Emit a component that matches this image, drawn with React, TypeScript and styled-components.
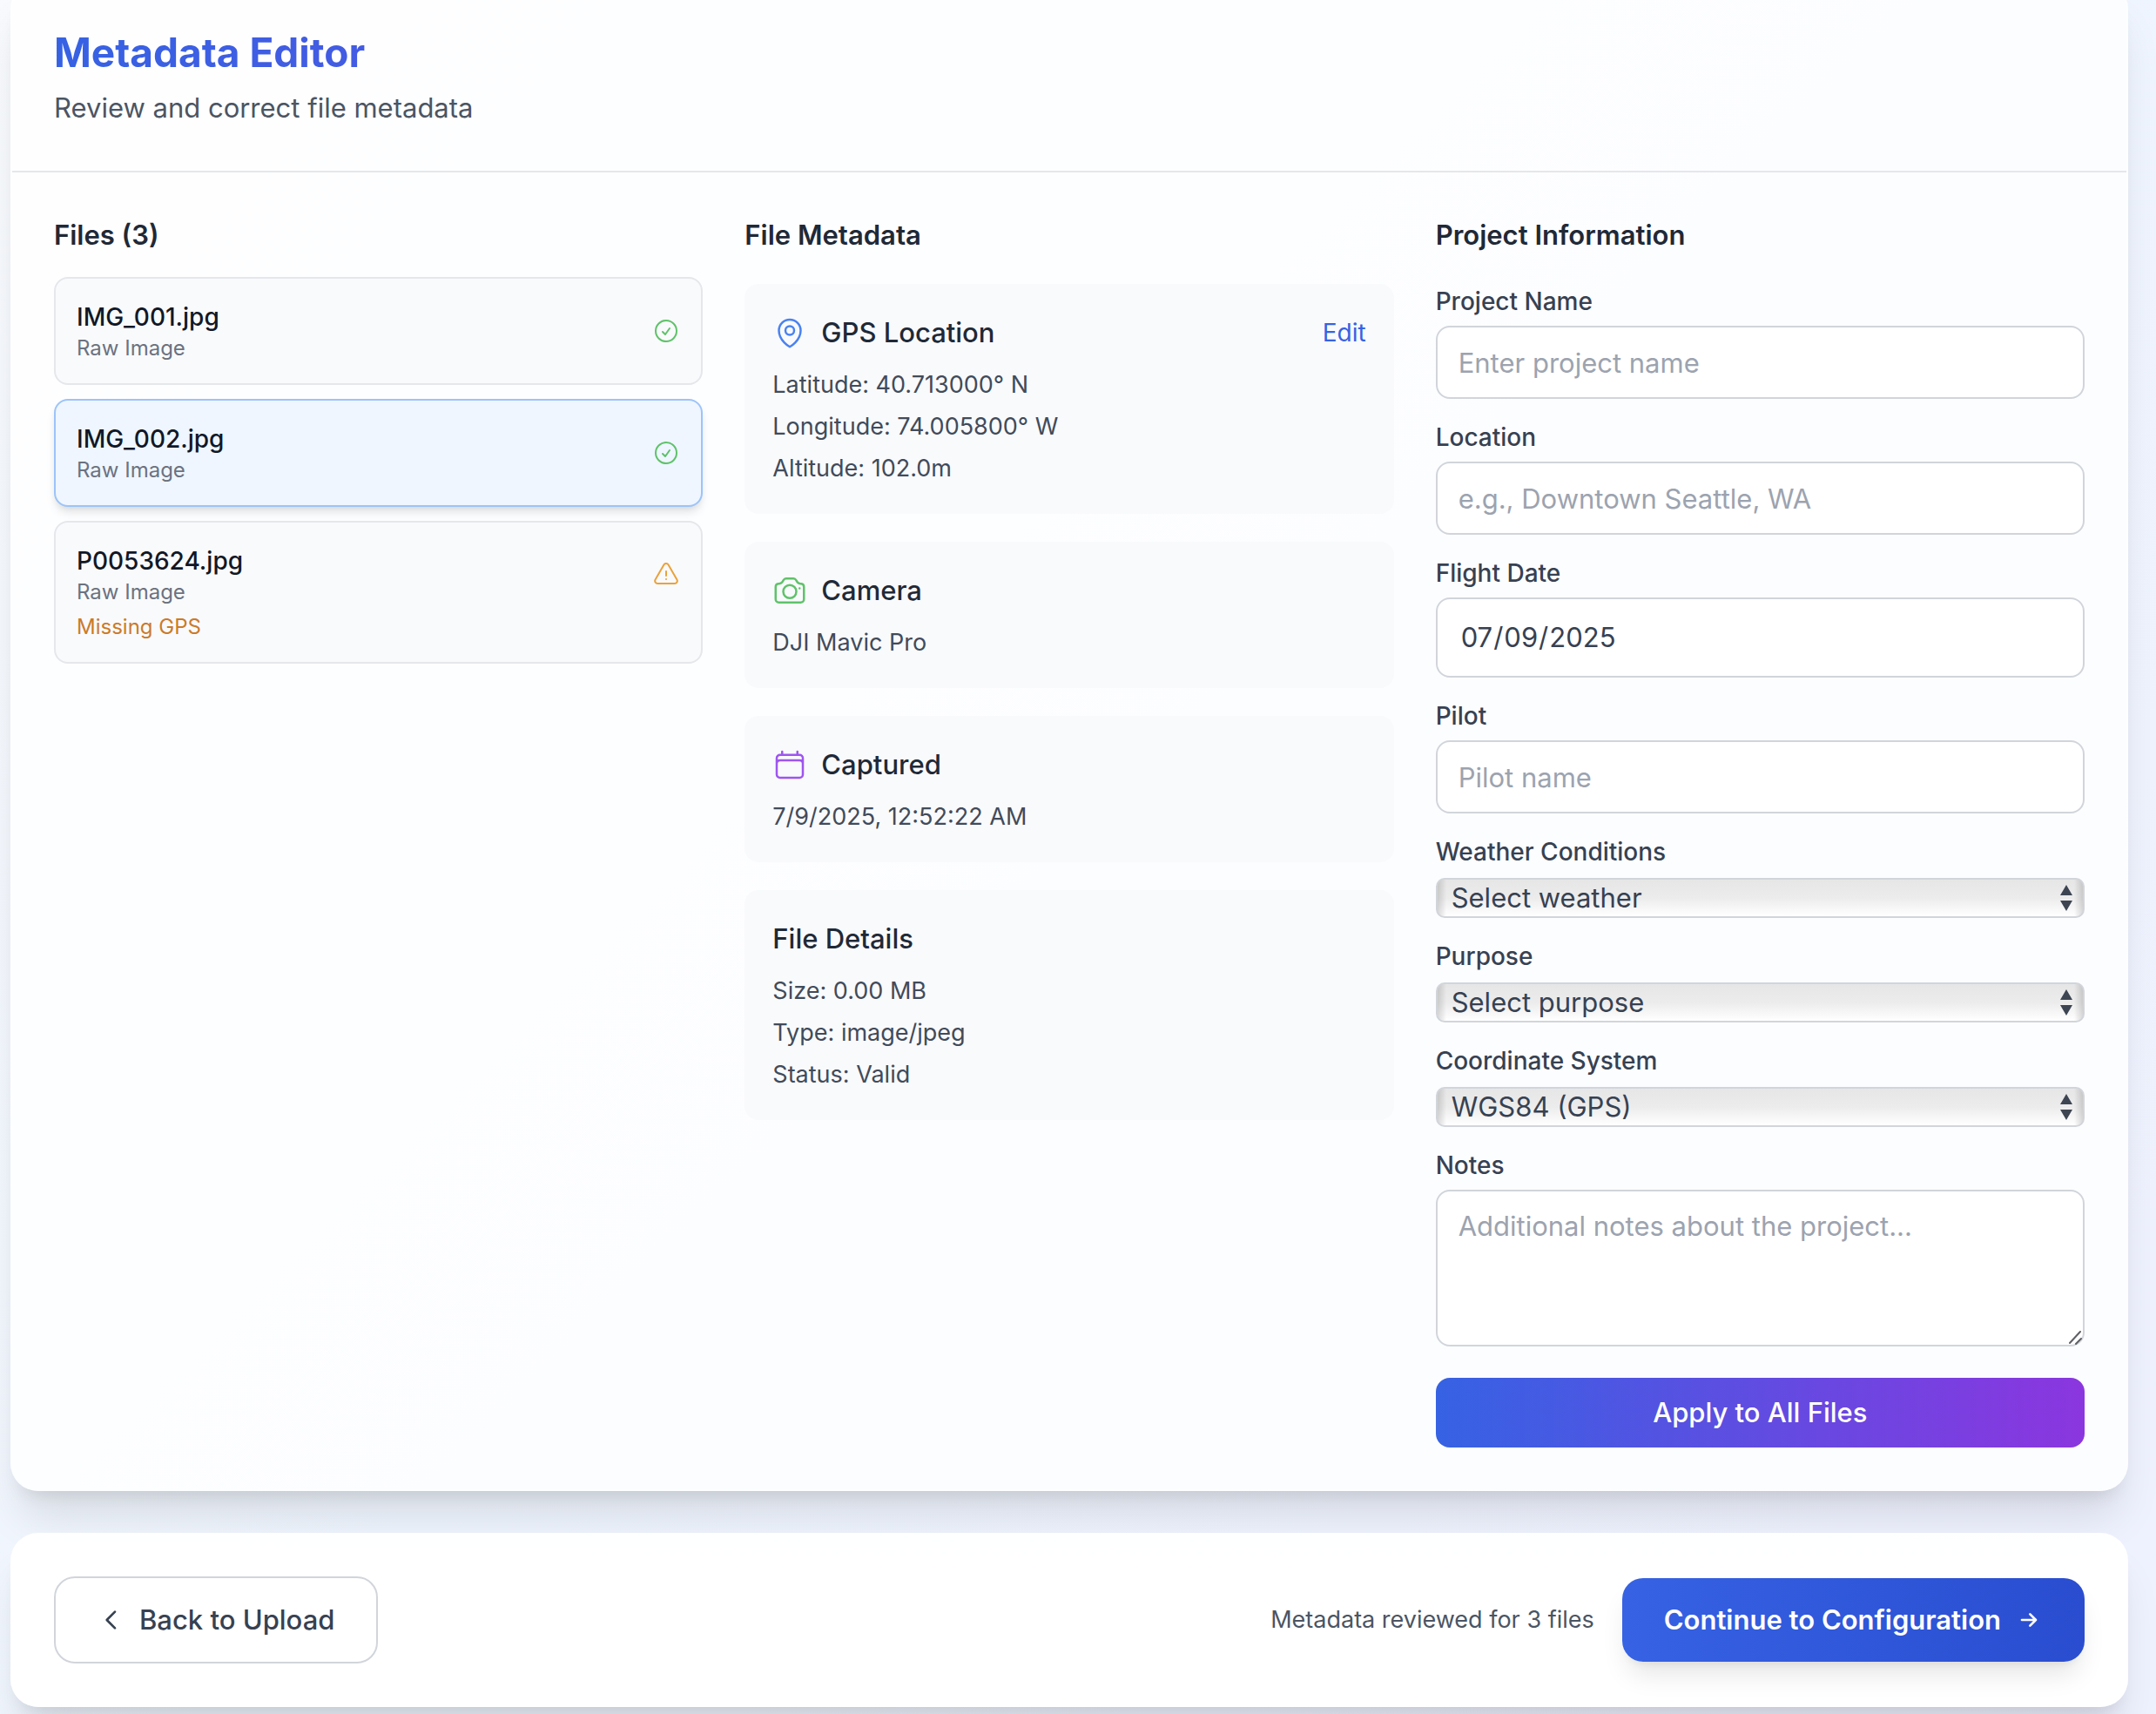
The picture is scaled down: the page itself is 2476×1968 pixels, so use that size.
import React, { useState } from 'react';
import styled, { createGlobalStyle, css } from 'styled-components';

const GlobalStyle = createGlobalStyle`
  *, *::before, *::after { box-sizing: border-box; }
  html { background: #f1f4fd; }
  body {
    margin: 0;
    overflow: hidden;
    font-family: Inter, "Liberation Sans", sans-serif;
    font-size: 31px;
    line-height: 48px;
    color: #1f2937;
    -webkit-font-smoothing: antialiased;
  }
  h1, h2, h3, p { margin: 0; font-size: inherit; font-weight: inherit; }
  button, input, select, textarea { font: inherit; color: inherit; margin: 0; }
`;

const Page = styled.main`
  display: flex;
  flex-direction: column;
  gap: 48px;
  margin-top: -22px;
  padding: 0 32px 8px 12px;
  background: linear-gradient(135deg, #f8fafd 0%, #eff5fe 50%, #eef1fe 100%);
`;

const Card = styled.section`
  border: 2px solid rgba(255, 255, 255, 0.2);
  border-radius: 32px;
  background: rgba(255, 255, 255, 0.82);
  background-clip: border-box;
  box-shadow: 0 40px 50px -10px rgba(0, 0, 0, 0.1), 0 16px 20px -12px rgba(0, 0, 0, 0.1);
`;

const Header = styled.header`
  padding: 48px;
  border-bottom: 2px solid #e5e7eb;
`;

const Title = styled.h1`
  margin-bottom: 8px;
  font-size: 46px;
  line-height: 64px;
  font-weight: 700;
  color: transparent;
  background: linear-gradient(90deg, #3662e3, #8b36df);
  background-clip: text;
  -webkit-background-clip: text;
`;

const Subtitle = styled.p`
  color: #4b5563;
`;

const Columns = styled.div`
  display: grid;
  grid-template-columns: repeat(3, minmax(0, 1fr));
  gap: 48px;
  padding: 48px;
`;

const Column = styled.div<{ $gap: number }>`
  display: flex;
  flex-direction: column;
  gap: ${(p) => p.$gap}px;
`;

const ColumnTitle = styled.h2`
  font-weight: 600;
`;

const FileList = styled.div`
  display: flex;
  flex-direction: column;
  gap: 16px;
`;

const FileItem = styled.button<{ $active: boolean }>`
  display: block;
  width: 100%;
  padding: 24px;
  border: 2px solid #e5e7eb;
  border-radius: 16px;
  background: #f9fafc;
  text-align: left;
  cursor: pointer;
  ${(p) =>
    p.$active &&
    css`
      border-color: #9cc4f9;
      background: #eff6ff;
      box-shadow: 0 8px 12px -2px rgba(0, 0, 0, 0.1), 0 4px 8px -4px rgba(0, 0, 0, 0.1);
    `}
`;

const FileRow = styled.span`
  display: flex;
  align-items: center;
  justify-content: space-between;
`;

const FileText = styled.span`
  display: flex;
  flex-direction: column;
`;

const FileName = styled.span`
  font-size: 28px;
  line-height: 40px;
  font-weight: 500;
  color: #111827;
`;

const FileKind = styled.span`
  font-size: 24px;
  line-height: 32px;
  color: #6b7280;
`;

const FileIssue = styled.span`
  display: block;
  margin-top: 8px;
  font-size: 24px;
  line-height: 32px;
  color: #cb7a2a;
`;

const Icon = styled.svg<{ $size: number; $color?: string }>`
  display: block;
  flex: none;
  width: ${(p) => p.$size}px;
  height: ${(p) => p.$size}px;
  fill: none;
  stroke: ${(p) => p.$color ?? 'currentColor'};
  stroke-linecap: round;
  stroke-linejoin: round;
`;

const Panel = styled.article`
  padding: 32px;
  border-radius: 16px;
  background: #f9fafc;
`;

const PanelHead = styled.div`
  display: flex;
  align-items: center;
  gap: 16px;
  margin-bottom: 16px;
`;

const PanelTitle = styled.h3`
  flex: 1;
  font-weight: 500;
`;

const EditButton = styled.button`
  padding: 0;
  border: 0;
  background: none;
  font-size: 28px;
  line-height: 40px;
  color: #3662e3;
  cursor: pointer;
`;

const PanelLines = styled.div`
  display: flex;
  flex-direction: column;
  gap: 8px;
  font-size: 27px;
  line-height: 40px;
  color: #414b5a;
`;

const Form = styled.form`
  display: flex;
  flex-direction: column;
  gap: 24px;
`;

const Field = styled.div`
  display: flex;
  flex-direction: column;
  gap: 8px;
`;

const Label = styled.label`
  font-size: 28px;
  line-height: 40px;
  font-weight: 500;
  color: #374151;
`;

const control = css`
  width: 100%;
  padding: 16px 24px;
  border: 2px solid #d1d5db;
  border-radius: 16px;
  background: #fff;
  color: #374151;
  &::placeholder { color: #9ca3af; opacity: 1; }
`;

const TextInput = styled.input`
  ${control}
  height: 84px;
`;

const DateInput = styled.input`
  ${control}
  height: 92px;
  padding: 16px 24px;
  &::-webkit-datetime-edit { padding: 0 2px; }
  &::-webkit-calendar-picker-indicator { opacity: 0; }
`;

const NotesBox = styled.div`
  display: grid;
  margin-bottom: 12px;
  > * { grid-area: 1 / 1; }
`;

const NotesArea = styled.textarea`
  ${control}
  display: block;
  height: 180px;
  resize: none;
`;

const Grip = styled.svg`
  place-self: end;
  width: 16px;
  height: 16px;
  margin: 2px;
  fill: none;
  stroke: #5f6064;
  stroke-width: 2;
  stroke-linecap: round;
  pointer-events: none;
`;

const SelectBox = styled.div`
  display: grid;
  align-items: center;
  margin-top: 2px;
  > * { grid-area: 1 / 1; }
`;

const Select = styled.select`
  appearance: none;
  width: 100%;
  height: 46px;
  padding: 0 48px 0 16px;
  border: 2px solid #d1d5db;
  border-radius: 10px;
  line-height: 40px;
  color: #374151;
  background:
    linear-gradient(90deg, rgba(0, 0, 0, 0.14), transparent 10px, transparent calc(100% - 10px), rgba(0, 0, 0, 0.14)),
    linear-gradient(#e6e6e6, #ececec 50%, #ffffff);
`;

const Stepper = styled.svg`
  justify-self: end;
  width: 14px;
  height: 30px;
  margin-right: 14px;
  fill: #3d4552;
  pointer-events: none;
`;

const ApplyButton = styled.button`
  height: 80px;
  border: 0;
  border-radius: 16px;
  background: linear-gradient(90deg, #3662e3, #8b36df);
  font-weight: 500;
  color: #fff;
  cursor: pointer;
`;

const Footer = styled(Card).attrs({ as: 'footer' })`
  display: flex;
  align-items: center;
  justify-content: space-between;
  padding: 48px;
  background: rgba(255, 255, 255, 0.95);
`;

const FooterEnd = styled.div`
  display: flex;
  align-items: center;
  gap: 32px;
`;

const FooterNote = styled.span`
  font-size: 27px;
  line-height: 40px;
  color: #4b5563;
`;

const FooterButton = styled.button<{ $primary?: boolean }>`
  display: flex;
  align-items: center;
  gap: 16px;
  padding: 24px 48px;
  border: 2px solid #d1d5db;
  border-radius: 24px;
  background: transparent;
  font-weight: 500;
  color: #374151;
  cursor: pointer;
  ${(p) =>
    p.$primary
      ? css`
          border: 0;
          background: linear-gradient(90deg, #3662e3, #2a4dd0);
          font-weight: 600;
          color: #fff;
          box-shadow: 0 20px 30px -6px rgba(0, 0, 0, 0.1), 0 8px 12px -8px rgba(0, 0, 0, 0.1);
        `
      : ''}
`;

const files = [
  { name: 'IMG_001.jpg', kind: 'Raw Image', issue: '' },
  { name: 'IMG_002.jpg', kind: 'Raw Image', issue: '' },
  { name: 'P0053624.jpg', kind: 'Raw Image', issue: 'Missing GPS' },
];

const ValidIcon = () => (
  <Icon viewBox="0 0 24 24" $size={32} $color="#5fc26a" strokeWidth={1.5} aria-hidden>
    <path d="M9 12.75 11.25 15 15 9.75M21 12a9 9 0 1 1-18 0 9 9 0 0 1 18 0Z" />
  </Icon>
);

const WarningIcon = () => (
  <Icon viewBox="0 0 24 24" $size={32} $color="#e9a23b" strokeWidth={1.5} aria-hidden>
    <path d="M12 9v3.75m-9.303 3.376c-.866 1.5.217 3.374 1.948 3.374h14.71c1.73 0 2.813-1.874 1.948-3.374L13.949 3.378c-.866-1.5-3.032-1.5-3.898 0L2.697 16.126ZM12 15.75h.007v.008H12v-.008Z" />
  </Icon>
);

const PinIcon = () => (
  <Icon viewBox="0 0 24 24" $size={40} $color="#4a82f0" strokeWidth={1.5} aria-hidden>
    <path d="M15 10.5a3 3 0 1 1-6 0 3 3 0 0 1 6 0Z" />
    <path d="M19.5 10.5c0 7.142-7.5 11.25-7.5 11.25S4.5 17.642 4.5 10.5a7.5 7.5 0 1 1 15 0Z" />
  </Icon>
);

const CameraIcon = () => (
  <Icon viewBox="0 0 24 24" $size={40} $color="#5fc26a" strokeWidth={1.5} aria-hidden>
    <path d="M6.827 6.175A2.31 2.31 0 0 1 5.186 7.23c-.38.054-.757.112-1.134.175C2.999 7.58 2.25 8.507 2.25 9.574V18a2.25 2.25 0 0 0 2.25 2.25h15A2.25 2.25 0 0 0 21.75 18V9.574c0-1.067-.75-1.994-1.802-2.169a47.865 47.865 0 0 0-1.134-.175 2.31 2.31 0 0 1-1.64-1.055l-.822-1.316a2.192 2.192 0 0 0-1.736-1.039 48.774 48.774 0 0 0-5.232 0 2.192 2.192 0 0 0-1.736 1.039l-.821 1.316Z" />
    <path d="M16.5 12.75a4.5 4.5 0 1 1-9 0 4.5 4.5 0 0 1 9 0ZM18.75 10.5h.008v.008h-.008V10.5Z" />
  </Icon>
);

const CalendarIcon = () => (
  <Icon viewBox="0 0 24 24" $size={40} $color="#9e55ef" strokeWidth={1.5} aria-hidden>
    <path d="M6.75 3v2.25M17.25 3v2.25M3 18.75V7.5a2.25 2.25 0 0 1 2.25-2.25h13.5A2.25 2.25 0 0 1 21 7.5v11.25m-18 0A2.25 2.25 0 0 0 5.25 21h13.5A2.25 2.25 0 0 0 21 18.75m-18 0v-7.5A2.25 2.25 0 0 1 5.25 9h13.5A2.25 2.25 0 0 1 21 11.25v7.5" />
  </Icon>
);

function SelectField({ id, label, options }: { id: string; label: string; options: string[] }) {
  return (
    <Field>
      <Label htmlFor={id}>{label}</Label>
      <SelectBox>
        <Select id={id} defaultValue={options[0]}>
          {options.map((o) => (
            <option key={o}>{o}</option>
          ))}
        </Select>
        <Stepper viewBox="0 0 14 30" aria-hidden>
          <path d="M0 12 7 0l7 12ZM0 18h14L7 30Z" />
        </Stepper>
      </SelectBox>
    </Field>
  );
}

export default function App() {
  const [active, setActive] = useState('IMG_002.jpg');
  return (
    <>
      <GlobalStyle />
      <Page>
        <Card>
          <Header>
            <Title>Metadata Editor</Title>
            <Subtitle>Review and correct file metadata</Subtitle>
          </Header>
          <Columns>
            <Column $gap={24}>
              <ColumnTitle>Files (3)</ColumnTitle>
              <FileList>
                {files.map((f) => (
                  <FileItem key={f.name} type="button" $active={f.name === active} onClick={() => setActive(f.name)}>
                    <FileRow>
                      <FileText>
                        <FileName>{f.name}</FileName>
                        <FileKind>{f.kind}</FileKind>
                      </FileText>
                      {f.issue ? <WarningIcon /> : <ValidIcon />}
                    </FileRow>
                    {f.issue && <FileIssue>{f.issue}</FileIssue>}
                  </FileItem>
                ))}
              </FileList>
            </Column>

            <Column $gap={32}>
              <ColumnTitle>File Metadata</ColumnTitle>
              <Panel>
                <PanelHead>
                  <PinIcon />
                  <PanelTitle>GPS Location</PanelTitle>
                  <EditButton type="button">Edit</EditButton>
                </PanelHead>
                <PanelLines>
                  <p>Latitude: 40.713000° N</p>
                  <p>Longitude: 74.005800° W</p>
                  <p>Altitude: 102.0m</p>
                </PanelLines>
              </Panel>
              <Panel>
                <PanelHead>
                  <CameraIcon />
                  <PanelTitle>Camera</PanelTitle>
                </PanelHead>
                <PanelLines>
                  <p>DJI Mavic Pro</p>
                </PanelLines>
              </Panel>
              <Panel>
                <PanelHead>
                  <CalendarIcon />
                  <PanelTitle>Captured</PanelTitle>
                </PanelHead>
                <PanelLines>
                  <p>7/9/2025, 12:52:22 AM</p>
                </PanelLines>
              </Panel>
              <Panel>
                <PanelHead>
                  <PanelTitle>File Details</PanelTitle>
                </PanelHead>
                <PanelLines>
                  <p>Size: 0.00 MB</p>
                  <p>Type: image/jpeg</p>
                  <p>Status: Valid</p>
                </PanelLines>
              </Panel>
            </Column>

            <Column $gap={32}>
              <ColumnTitle>Project Information</ColumnTitle>
              <Form onSubmit={(e) => e.preventDefault()}>
                <Field>
                  <Label htmlFor="project">Project Name</Label>
                  <TextInput id="project" placeholder="Enter project name" />
                </Field>
                <Field>
                  <Label htmlFor="location">Location</Label>
                  <TextInput id="location" placeholder="e.g., Downtown Seattle, WA" />
                </Field>
                <Field>
                  <Label htmlFor="date">Flight Date</Label>
                  <DateInput id="date" type="date" defaultValue="2025-07-09" />
                </Field>
                <Field>
                  <Label htmlFor="pilot">Pilot</Label>
                  <TextInput id="pilot" placeholder="Pilot name" />
                </Field>
                <SelectField id="weather" label="Weather Conditions" options={['Select weather', 'Clear', 'Cloudy']} />
                <SelectField id="purpose" label="Purpose" options={['Select purpose', 'Mapping', 'Inspection']} />
                <SelectField id="crs" label="Coordinate System" options={['WGS84 (GPS)', 'UTM']} />
                <Field>
                  <Label htmlFor="notes">Notes</Label>
                  <NotesBox>
                    <NotesArea id="notes" placeholder="Additional notes about the project..." />
                    <Grip viewBox="0 0 16 16" aria-hidden>
                      <path d="M1 14 13 1M8 15 14 9" />
                    </Grip>
                  </NotesBox>
                </Field>
                <ApplyButton type="submit">Apply to All Files</ApplyButton>
              </Form>
            </Column>
          </Columns>
        </Card>

        <Footer>
          <FooterButton type="button">
            <Icon viewBox="0 0 24 24" $size={32} strokeWidth={2} aria-hidden>
              <path d="M15 19l-7-7 7-7" />
            </Icon>
            Back to Upload
          </FooterButton>
          <FooterEnd>
            <FooterNote>Metadata reviewed for 3 files</FooterNote>
            <FooterButton type="button" $primary>
              Continue to Configuration
              <Icon viewBox="0 0 24 24" $size={32} strokeWidth={2} aria-hidden>
                <path d="M13 7l5 5m0 0l-5 5m5-5H6" />
              </Icon>
            </FooterButton>
          </FooterEnd>
        </Footer>
      </Page>
    </>
  );
}
